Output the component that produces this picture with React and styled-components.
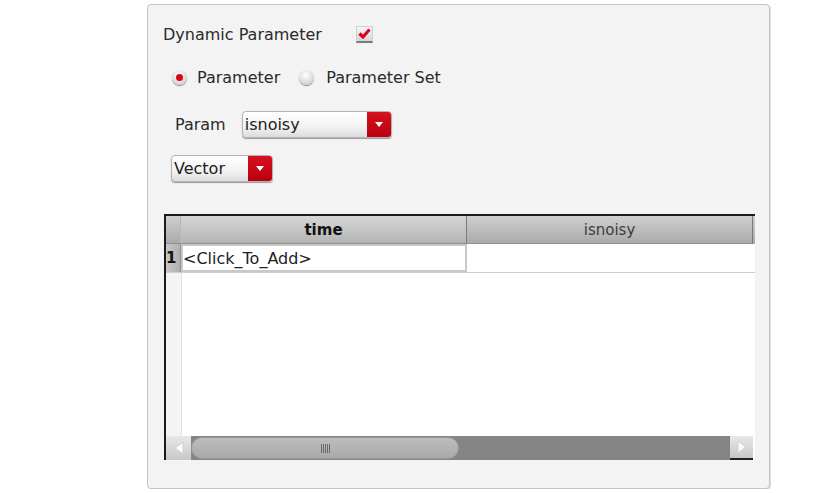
import styled, { createGlobalStyle } from 'styled-components';

const GlobalStyle = createGlobalStyle`
    body {
        margin: 0;
        background: #fff;
        font-family: "DejaVu Sans", "Noto Sans", sans-serif;
    }
`

const Page = styled.div`
    padding: 4px 0 0 147px;
`
const Panel = styled.div`
    width: 621px;
    height: 483px;
    border: 1px solid #c4c4c4;
    border-radius: 4px;
    background: #f3f3f3;
    box-shadow: 1px 1px 0 #e0e0e0;
    display: flex;
    flex-direction: column;
`
const Row = styled.div`
    display: flex;
    align-items: center;
    height: ${p => p.$h}px;
    margin-left: ${p => p.$left}px;
    margin-top: ${p => p.$top}px;
`
const Label = styled.span`
    font-size: 16px;
    color: #2a2a2a;
    margin-right: ${p => p.$mr || 0}px;
`
const CheckBox = styled.span`
    width: 17px;
    height: 17px;
    background: linear-gradient(#f6f6f6, #d6d6d6);
    border: 1px solid #cfcfcf;
    border-bottom: 2px solid #7a7a7a;
    box-sizing: border-box;
    display: flex;
    align-items: center;
    justify-content: center;
`
const Radio = styled.span`
    width: 15px;
    height: 15px;
    border-radius: 50%;
    background: radial-gradient(circle at 45% 35%, #ffffff, #d4d4d4 70%, #b0b0b0);
    box-shadow: 0 1px 1px #888;
    display: flex;
    align-items: center;
    justify-content: center;
    margin-right: ${p => (p.$on ? 10 : 12)}px;
    &::after {
        content: '';
        display: ${p => (p.$on ? 'block' : 'none')};
        width: 7px;
        height: 7px;
        border-radius: 50%;
        background: #e00010;
    }
`
const RadioGroup = styled.label`
    display: flex;
    align-items: center;
    margin-right: ${p => p.$mr || 0}px;
`
const Combo = styled.div`
    width: ${p => p.$w}px;
    height: 27px;
    box-sizing: border-box;
    border: 1px solid #b4b4b4;
    border-radius: 4px;
    background: linear-gradient(#ffffff, #f2f2f2 60%, #dcdcdc);
    box-shadow: 0 1px 1px #9a9a9a;
    display: flex;
    overflow: hidden;
`
const ComboText = styled.span`
    flex: 1;
    font-size: 16px;
    color: #202020;
    padding-left: 2px;
    line-height: 25px;
`
const ComboButton = styled.span`
    width: 24px;
    background: linear-gradient(#d8101e, #b80010);
    display: flex;
    align-items: center;
    justify-content: center;
    &::after {
        content: '';
        border-left: 4px solid transparent;
        border-right: 4px solid transparent;
        border-top: 5px solid #fff;
    }
`
const Table = styled.div`
    margin: 32px 0 0 16px;
    width: 591px;
    height: 246px;
    box-sizing: border-box;
    border-left: 2px solid #1a1a1a;
    border-top: 2px solid #1a1a1a;
    background: #fff;
    display: flex;
    flex-direction: column;
`
const HeaderRow = styled.div`
    display: grid;
    grid-template-columns: 15px 286px 286px;
    height: 28px;
    background: linear-gradient(#cfcfcf, #a9a9a9);
`
const HeadCell = styled.div`
    border-right: 1px solid ${p => (p.$corner ? '#b8b8b8' : '#7a7a7a')};
    border-bottom: 1px solid #909090;
    background: ${p => (p.$sel ? 'linear-gradient(#d6d6d6, #b4b4b4)' : 'none')};
    display: flex;
    align-items: center;
    justify-content: center;
    font-size: 15px;
    font-weight: ${p => (p.$sel ? 'bold' : 'normal')};
    color: ${p => (p.$sel ? '#111' : '#3c3c3c')};
`
const DataRow = styled.div`
    display: grid;
    grid-template-columns: 15px 286px 286px;
    height: 28px;
    border-bottom: 1px solid #cfcfcf;
`
const RowHead = styled.div`
    background: linear-gradient(90deg, #c8c8c8, #b0b0b0);
    border-right: 1px solid #909090;
    font-size: 15px;
    font-weight: bold;
    color: #111;
    display: flex;
    align-items: center;
`
const Cell = styled.div`
    border: ${p => (p.$edit ? '2px solid #c8c8c8' : 'none')};
    font-size: 16px;
    color: #222;
    display: flex;
    align-items: center;
`
const Empty = styled.div`
    flex: 1;
    display: flex;
`
const LeftGutter = styled.div`
    width: 15px;
    background: #f4f4f4;
    border-right: 1px solid #e0e0e0;
`
const ScrollBar = styled.div`
    height: 24px;
    display: flex;
    background: #858585;
    margin-right: 2px;
`
const ArrowBtn = styled.div`
    width: ${p => p.$w}px;
    background: linear-gradient(#e8e8e8, #c8c8c8);
    border-bottom: ${p => (p.$right ? '2px solid #222' : 'none')};
    box-sizing: border-box;
    display: flex;
    align-items: center;
    justify-content: center;
`
const Thumb = styled.div`
    width: 268px;
    margin: 1px 0;
    border-radius: 11px;
    background: linear-gradient(#bdbdbd, #a9a9a9);
    border: 1px solid #999;
    box-sizing: border-box;
    display: flex;
    align-items: center;
    justify-content: center;
    gap: 1px;
`
const Grip = styled.span`
    width: 1px;
    height: 9px;
    background: #6a6a6a;
`
const Spacer = styled.div`
    flex: 1;
`
const Tick = () => (
    <svg width="13" height="11" viewBox="0 0 13 11">
        <path d="M1.5 5.5 L5 9 L11.5 1.5" fill="none" stroke="#e0001a" strokeWidth="3.2" strokeLinejoin="round" />
    </svg>
)
const Tri = ({ dir }) => (
    <svg width="12" height="14" viewBox="0 0 12 14">
        {dir === 'left'
            ? <path d="M10 1 L2 7 L10 13 Z" fill="#fafafa" stroke="#d0d0d0" />
            : <path d="M2 1 L10 7 L2 13 Z" fill="#fafafa" stroke="#d0d0d0" />}
    </svg>
)

const App = () => {
    return (
        <Page>
            <GlobalStyle />
            <Panel>
                <Row $h={20} $left={15} $top={19}>
                    <Label $mr={34}>Dynamic Parameter</Label>
                    <CheckBox><Tick /></CheckBox>
                </Row>
                <Row $h={20} $left={24} $top={23}>
                    <RadioGroup $mr={19}><Radio $on /><Label>Parameter</Label></RadioGroup>
                    <RadioGroup><Radio /><Label>Parameter Set</Label></RadioGroup>
                </Row>
                <Row $h={28} $left={27} $top={23}>
                    <Label $mr={16}>Param</Label>
                    <Combo $w={150}><ComboText>isnoisy</ComboText><ComboButton /></Combo>
                </Row>
                <Row $h={28} $left={23} $top={16}>
                    <Combo $w={102}><ComboText>Vector</ComboText><ComboButton /></Combo>
                </Row>
                <Table>
                    <HeaderRow>
                        <HeadCell $corner />
                        <HeadCell $sel>time</HeadCell>
                        <HeadCell>isnoisy</HeadCell>
                    </HeaderRow>
                    <DataRow>
                        <RowHead>1</RowHead>
                        <Cell $edit>&lt;Click_To_Add&gt;</Cell>
                        <Cell />
                    </DataRow>
                    <Empty><LeftGutter /></Empty>
                    <ScrollBar>
                        <ArrowBtn $w={25}><Tri dir="left" /></ArrowBtn>
                        <Thumb>{[0, 1, 2, 3, 4].map(i => <Grip key={i} />)}</Thumb>
                        <Spacer />
                        <ArrowBtn $w={23} $right><Tri dir="right" /></ArrowBtn>
                    </ScrollBar>
                </Table>
            </Panel>
        </Page>
    )
}

export default App;
